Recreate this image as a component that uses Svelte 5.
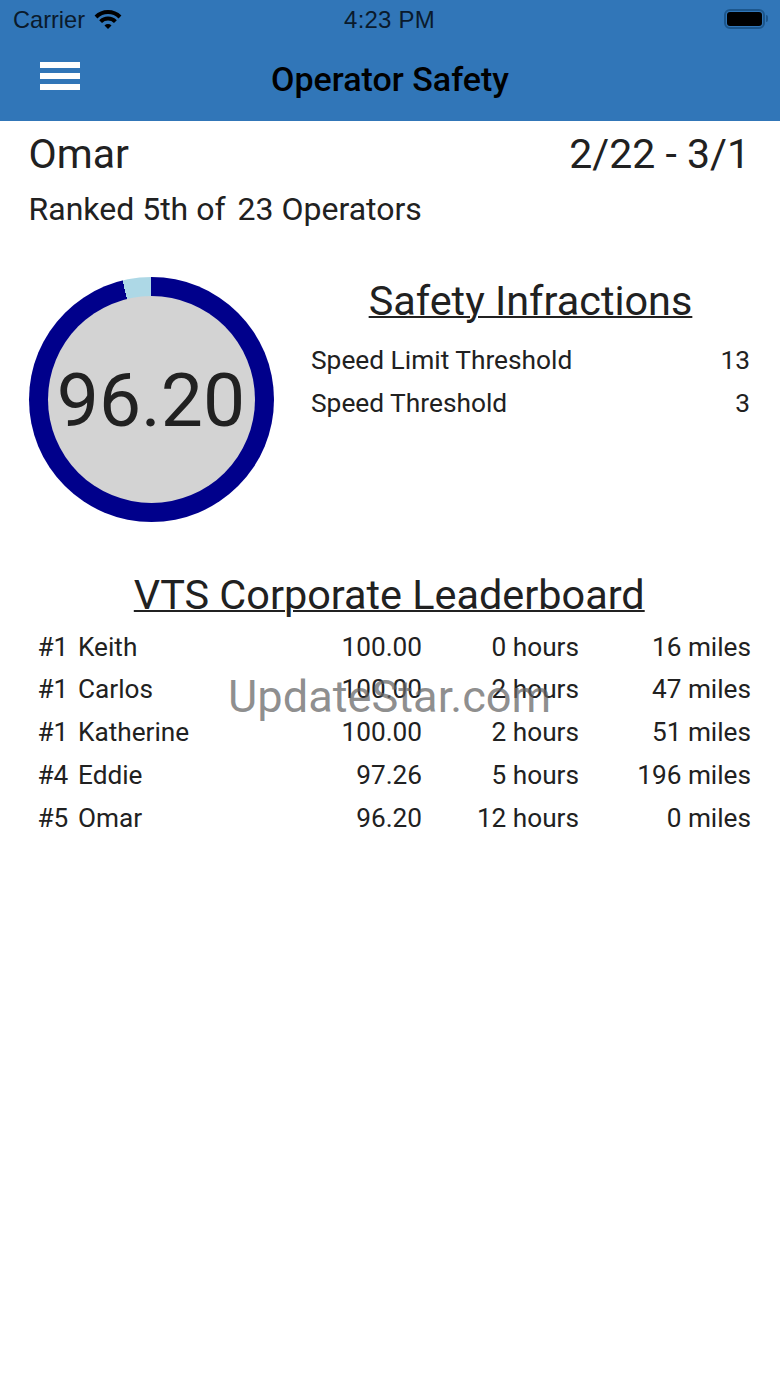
<script>
	const infractions = [
		{ name: 'Speed Limit Threshold', count: 13 },
		{ name: 'Speed Threshold', count: 3 }
	];

	const leaders = [
		{ rank: '#1', name: 'Keith', score: '100.00', hours: '0 hours', miles: '16 miles' },
		{ rank: '#1', name: 'Carlos', score: '100.00', hours: '2 hours', miles: '47 miles' },
		{ rank: '#1', name: 'Katherine', score: '100.00', hours: '2 hours', miles: '51 miles' },
		{ rank: '#4', name: 'Eddie', score: '97.26', hours: '5 hours', miles: '196 miles' },
		{ rank: '#5', name: 'Omar', score: '96.20', hours: '12 hours', miles: '0 miles' }
	];
</script>

<div class="page">
	<header class="header">
		<div class="status">
			<div class="status-left">
				<span class="carrier">Carrier</span>
				<svg class="wifi" viewBox="0 0 28 21" width="28" height="21">
					<path class="arc" d="M2 9A17 17 0 0 1 26 9" />
					<path class="arc" d="M6.600 13.600A10.500 10.500 0 0 1 21.400 13.600" />
					<path d="M10.500 17.500A5 5 0 0 1 17.500 17.500L14 21z" />
				</svg>
			</div>
			<span class="time">4:23 PM</span>
			<div class="battery">
				<div class="battery-body"><div class="battery-fill"></div></div>
				<div class="battery-cap"></div>
			</div>
		</div>
		<div class="nav">
			<div class="menu">
				<span></span><span></span><span></span>
			</div>
			<h1>Operator Safety</h1>
		</div>
	</header>

	<main class="content">
		<div class="top-row">
			<span>Omar</span>
			<span>2/22 - 3/1</span>
		</div>
		<div class="rank"><span>Ranked 5th of</span><span>23 Operators</span></div>

		<section class="summary">
			<div class="gauge">
				<div class="gauge-inner">96.20</div>
			</div>
			<div class="infractions">
				<h2>Safety Infractions</h2>
				{#each infractions as item}
					<div class="infraction">
						<span>{item.name}</span>
						<span>{item.count}</span>
					</div>
				{/each}
			</div>
		</section>

		<section class="leaderboard">
			<h2>VTS Corporate Leaderboard</h2>
			{#each leaders as row}
				<div class="leader">
					<span>{row.rank}</span>
					<span>{row.name}</span>
					<span class="num">{row.score}</span>
					<span class="num">{row.hours}</span>
					<span class="num">{row.miles}</span>
				</div>
			{/each}
			<div class="watermark">UpdateStar.com</div>
		</section>
	</main>
</div>

<style>
	:global(body) {
		margin: 0;
		background: #fff;
	}

	.page {
		width: 780px;
		height: 1387px;
		overflow: hidden;
		font-family: Roboto, "Liberation Sans", sans-serif;
		color: #212121;
	}

	.header {
		height: 121px;
		background: #3176b8;
		box-sizing: border-box;
		color: #000;
	}

	.status {
		height: 40px;
		padding: 0 14px 0 13px;
		display: grid;
		grid-template-columns: 1fr auto 1fr;
		align-items: center;
	}

	.status-left {
		display: flex;
		align-items: center;
		gap: 9px;
	}

	.carrier {
		font-family: "Liberation Sans", sans-serif;
		font-size: 23.600px;
		color: #0a1a2c;
	}

	.wifi {
		fill: #000;
		margin-bottom: 4px;
	}

	.arc {
		fill: none;
		stroke: #000;
		stroke-width: 4;
	}

	.time {
		font-family: "Liberation Sans", sans-serif;
		font-size: 24px;
		color: #0a1a2c;
		letter-spacing: 0.2px;
	}

	.battery {
		justify-self: end;
		display: flex;
		align-items: center;
		margin-right: -2px;
		margin-bottom: 3px;
	}

	.battery-body {
		width: 35px;
		height: 14px;
		padding: 1px;
		border: 2px solid #1c568c;
		border-radius: 6px;
	}

	.battery-fill {
		width: 100%;
		height: 100%;
		background: #000;
		border-radius: 3px;
	}

	.battery-cap {
		width: 2px;
		height: 7px;
		margin-left: 1px;
		background: #1c568c;
		border-radius: 0 2px 2px 0;
	}

	.nav {
		position: relative;
		height: 81px;
		display: flex;
		align-items: center;
		justify-content: center;
	}

	.nav h1 {
		margin: 0 0 3px;
		font-size: 34px;
		font-weight: 500;
		color: #000;
	}

	.menu {
		position: absolute;
		left: 40px;
		top: 22px;
		width: 40px;
		display: flex;
		flex-direction: column;
		gap: 5px;
	}

	.menu span {
		height: 6px;
		background: #fff;
	}

	.content {
		padding: 0 30px 0 28.500px;
	}

	.top-row {
		display: flex;
		justify-content: space-between;
		padding-top: 9px;
		font-size: 41px;
		line-height: 48px;
	}

	.rank {
		display: flex;
		gap: 12px;
		margin-top: 13px;
		font-size: 32px;
		line-height: 36px;
	}

	.summary {
		display: flex;
		margin-top: 50px;
	}

	.gauge {
		flex: none;
		width: 245px;
		height: 245px;
		border-radius: 50%;
		background: conic-gradient(#00008b 0 96.2%, #add8e6 96.2% 100%);
		display: flex;
		align-items: center;
		justify-content: center;
	}

	.gauge-inner {
		width: 207px;
		height: 207px;
		border-radius: 50%;
		background: #d3d3d3;
		display: flex;
		align-items: center;
		justify-content: center;
		font-size: 75px;
	}

	.infractions {
		flex: 1;
		margin-left: 37.500px;
	}

	.infractions h2 {
		margin: 0 0 14px;
		text-align: center;
		font-size: 41.400px;
		line-height: 48px;
		font-weight: 400;
		text-decoration: underline;
		text-decoration-thickness: 2px;
	}

	.infraction {
		display: flex;
		justify-content: space-between;
		font-size: 26.300px;
		line-height: 43px;
	}

	.leaderboard {
		position: relative;
		margin-top: 49px;
	}

	.leaderboard h2 {
		margin: 0 0 6.500px;
		text-align: center;
		font-size: 41.400px;
		line-height: 48px;
		font-weight: 400;
		text-decoration: underline;
		text-decoration-thickness: 2px;
	}

	.leader {
		display: grid;
		grid-template-columns: 40.500px 1fr 110px 157px 172px;
		margin-right: -1px;
		padding-left: 9px;
		font-size: 26.200px;
		line-height: 42.800px;
	}

	.num {
		text-align: right;
	}

	.watermark {
		position: absolute;
		left: 199.500px;
		top: 98px;
		font-size: 45.200px;
		line-height: 56px;
		color: rgba(100, 100, 100, 0.72);
		white-space: nowrap;
	}
</style>
